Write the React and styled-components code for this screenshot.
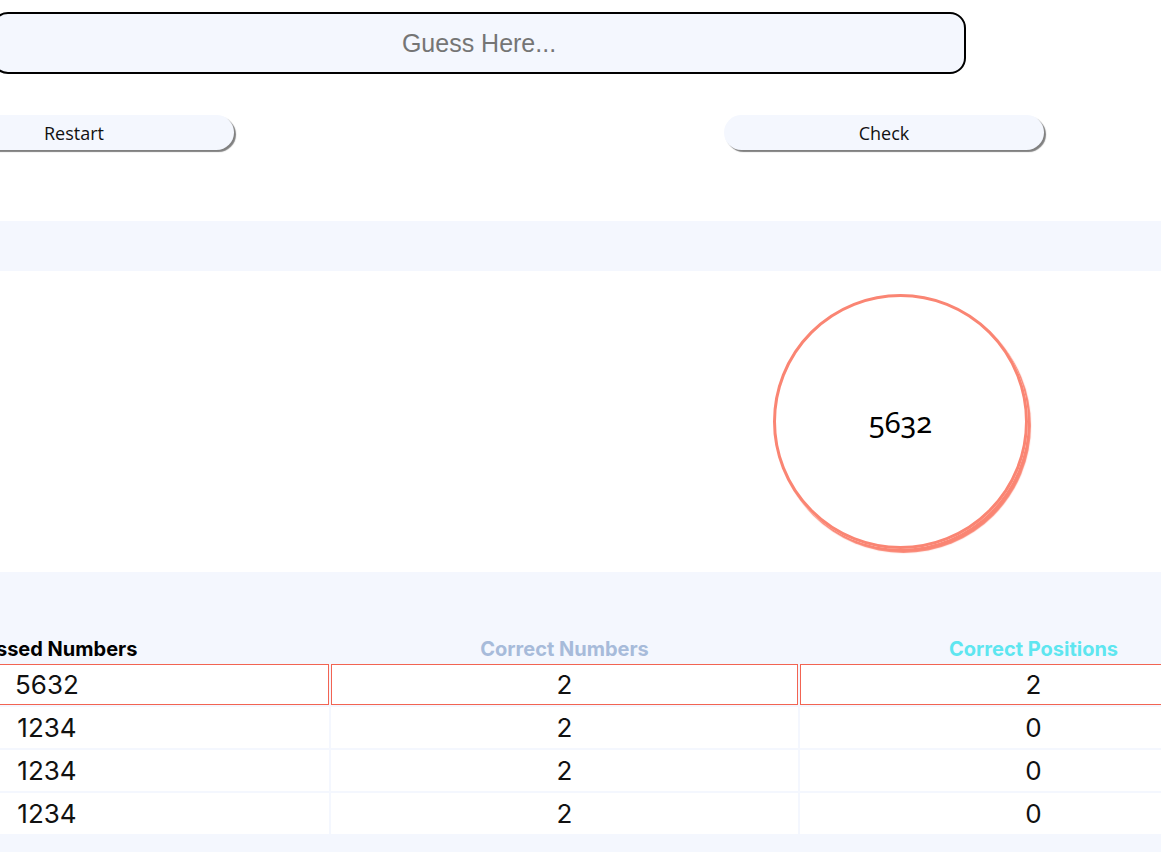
import React from 'react';
import styled, { createGlobalStyle } from 'styled-components';

const GlobalStyle = createGlobalStyle`
  html, body {
    margin: 0;
    padding: 0;
    background: #ffffff;
    overflow-x: hidden;
  }
  * {
    box-sizing: border-box;
  }
`;

const soft = '#f4f7fe';

const guesses = [
    { value: '5632', numbers: 2, positions: 2, current: true },
    { value: '1234', numbers: 2, positions: 0 },
    { value: '1234', numbers: 2, positions: 0 },
    { value: '1234', numbers: 2, positions: 0 },
];

const App = () => {
    return (
        <>
            <GlobalStyle />
            <StyledGame>
                <div className='guess-row'>
                    <input className='guess-input' type='text' placeholder='Guess Here...' />
                </div>
                <div className='controls'>
                    <Button>Restart</Button>
                    <Button>Check</Button>
                </div>
                <div className='band' />
                <div className='stage'>
                    <Bubble>5632</Bubble>
                </div>
                <div className='history'>
                    <HistoryTable>
                        <thead>
                            <tr>
                                <Head $color='#000000' style={{ width: 564 }}>Guessed Numbers</Head>
                                <Head $color='#a7bbda' style={{ width: 467 }}>Correct Numbers</Head>
                                <Head $color='#5ee6f0' style={{ width: 467 }}>Correct Positions</Head>
                            </tr>
                        </thead>
                        <tbody>
                            {guesses.map((g, i) => (
                                <tr key={i}>
                                    <Cell $current={g.current}>{g.value}</Cell>
                                    <Cell $current={g.current}>{g.numbers}</Cell>
                                    <Cell $current={g.current}>{g.positions}</Cell>
                                </tr>
                            ))}
                        </tbody>
                    </HistoryTable>
                </div>
            </StyledGame>
        </>
    );
};

export default App;

const StyledGame = styled.div`
    width: 100%;
    overflow: hidden;

    & .guess-row {
        padding-top: 12px;
        display: flex;
    }

    & .guess-input {
        margin-left: -8px;
        flex: 0 0 974px;
        height: 62px;
        border: 2px solid #000000;
        border-radius: 16px;
        background-color: ${soft};
        font-family: "Liberation Sans", Arial, sans-serif;
        font-size: 25px;
        text-align: center;
        outline: none;

        &::placeholder {
            color: #757575;
        }
    }

    & .controls {
        margin-top: 41px;
        margin-left: -86px;
        display: flex;
        gap: 490px;
    }

    & .band {
        margin-top: 71px;
        height: 50px;
        background-color: ${soft};
    }

    & .stage {
        height: 301px;
        display: flex;
        align-items: center;
        justify-content: flex-end;
        padding-right: 133px;
    }

    & .history {
        background-color: ${soft};
        padding: 62px 0 17px;
    }
`;

const Button = styled.button`
    flex: 0 0 320px;
    height: 35px;
    border: none;
    border-radius: 18px;
    background-color: ${soft};
    box-shadow: 2px 2px 1px #808080;
    font-family: "Open Sans", "Noto Sans", sans-serif;
    font-size: 18px;
    color: #111111;
    cursor: pointer;
`;

const Bubble = styled.div`
    width: 255px;
    height: 255px;
    border-radius: 50%;
    border: 3px solid #fa8573;
    box-shadow: 3px 4px 1px #fa8573;
    display: flex;
    align-items: center;
    justify-content: center;
    font-family: "Noto Sans", Lato, sans-serif;
    font-variant-numeric: oldstyle-nums;
    font-size: 29px;
    color: #000000;
`;

const HistoryTable = styled.table`
    margin-left: -237px;
    width: 1506px;
    table-layout: fixed;
    border-collapse: separate;
    border-spacing: 2px;
    font-family: Inter, "Noto Sans", sans-serif;
`;

const Head = styled.th`
    height: 26px;
    padding: 0;
    font-size: 20px;
    font-weight: 700;
    text-align: center;
    vertical-align: middle;
    color: ${p => p.$color};
`;

const Cell = styled.td`
    height: 41px;
    padding: 0;
    background-color: #ffffff;
    border: 1px solid ${p => (p.$current ? '#f26452' : '#ffffff')};
    font-size: 26px;
    font-weight: 400;
    text-align: center;
    vertical-align: middle;
    color: #111111;
`;
